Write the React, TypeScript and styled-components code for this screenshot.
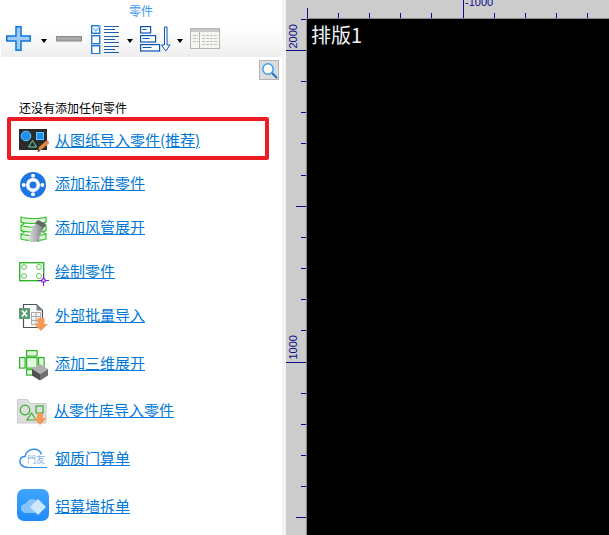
import React from 'react';
import styled, {createGlobalStyle} from 'styled-components';

const GlobalStyle = createGlobalStyle`
  html, body {
    margin: 0;
    padding: 0;
    background: #ffffff;
  }
`;

const Page = styled.div`
  width: 609px;
  height: 535px;
  display: flex;
  overflow: hidden;
  font-family: "Noto Sans CJK SC", "Liberation Sans", sans-serif;
`;

const SidePanel = styled.div`
  width: 282px;
  display: flex;
  flex-direction: column;
  flex-shrink: 0;
`;

const PanelTitle = styled.div`
  height: 23px;
  text-align: center;
  font-size: 12px;
  line-height: 22px;
  color: #3c96f0;
`;

const Toolbar = styled.div`
  height: 34px;
  margin-left: 1px;
  display: flex;
  align-items: flex-start;
  padding-left: 5px;
  background: linear-gradient(#ffffff 15%, #eeeeee);
`;

const ToolIcon = styled.svg<{$top: number; $after?: number}>`
  display: block;
  flex-shrink: 0;
  margin-top: ${p => p.$top}px;
  margin-right: ${p => p.$after ?? 0}px;
`;

const Caret = styled.span<{$before: number; $after: number}>`
  width: 0;
  height: 0;
  margin: 16px ${p => p.$after}px 0 ${p => p.$before}px;
  border-left: 3px solid transparent;
  border-right: 3px solid transparent;
  border-top: 4px solid #000000;
`;

const SearchRow = styled.div`
  display: flex;
  justify-content: flex-end;
  padding: 3px 3px 0 0;
`;

const SearchButton = styled.button`
  width: 20px;
  height: 20px;
  padding: 0;
  display: flex;
  align-items: center;
  justify-content: center;
  background: #dcdcdc;
  border: 1px solid #b4b4b4;
`;

const EmptyHint = styled.div`
  margin: 19px 0 0 19px;
  height: 18px;
  font-size: 12px;
  line-height: 18px;
  color: #000000;
`;

const ActionList = styled.div`
  display: flex;
  flex-direction: column;
  position: relative;
  margin-top: 1px;
`;

const ActionRow = styled.div<{$height: number}>`
  height: ${p => p.$height}px;
  display: flex;
  align-items: center;
`;

const IconSlot = styled.div<{$x: number; $dy: number; $width: number}>`
  width: ${p => p.$width}px;
  box-sizing: border-box;
  padding-left: ${p => p.$x}px;
  margin-top: ${p => p.$dy * 2}px;
  display: flex;
  align-items: center;
  flex-shrink: 0;
`;

const ActionLink = styled.a`
  font-size: 15px;
  line-height: 18px;
  color: #0078d7;
  text-decoration: underline;
  white-space: nowrap;
`;

const Highlight = styled.div`
  position: absolute;
  left: 7px;
  top: -1px;
  width: 262px;
  height: 43px;
  border: 4px solid #ed1c24;
  border-radius: 2px;
  box-sizing: border-box;
  pointer-events: none;
`;

const Divider = styled.div`
  width: 4px;
  flex-shrink: 0;
  background: #f4f4f4;
`;

const Workspace = styled.div`
  flex: 1;
  display: grid;
  grid-template-columns: 20px 1fr;
  grid-template-rows: 18px 1fr;
  background: #cccccc;
`;

const RulerDrawing = styled.svg`
  display: block;
  font-family: "Liberation Sans", sans-serif;
  font-size: 11px;
`;

const Canvas = styled.div`
  background: #000000;
  border-left: 1px solid #8c8c8c;
  border-top: 1px solid #8c8c8c;
  padding: 3px 0 0 4px;
  color: #eef4fa;
  font-size: 20px;
  line-height: 26px;
`;

const TICK = '#0c0c8a';
const topMinor = [338, 369, 400, 431, 494, 525, 556, 587];
const leftMinor = [81, 112, 143, 175, 237, 268, 299, 330, 393, 424, 455, 486];

const TopRuler = () => (
  <RulerDrawing width={303} height={18} viewBox="306 0 303 18">
    <rect x={307} y={8} width={1} height={10} fill={TICK} />
    {topMinor.map(x => (
      <rect key={x} x={x} y={13} width={1} height={5} fill={TICK} />
    ))}
    <rect x={463} y={0} width={1} height={18} fill={TICK} />
    <text x={465} y={6} fill={TICK}>-1000</text>
  </RulerDrawing>
);

const LeftRuler = () => (
  <RulerDrawing width={20} height={517} viewBox="286 18 20 517">
    <rect x={301} y={19} width={5} height={1} fill={TICK} />
    {leftMinor.map(y => (
      <rect key={y} x={301} y={y} width={5} height={1} fill={TICK} />
    ))}
    <rect x={286} y={50} width={20} height={1} fill={TICK} />
    <rect x={296} y={206} width={10} height={1} fill={TICK} />
    <rect x={286} y={362} width={20} height={1} fill={TICK} />
    <rect x={296} y={517} width={10} height={1} fill={TICK} />
    <text transform="translate(296.5 48.5) rotate(-90)" fill={TICK}>2000</text>
    <text transform="translate(296.5 359.5) rotate(-90)" fill={TICK}>1000</text>
  </RulerDrawing>
);

const PlusIcon = () => (
  <ToolIcon width={26} height={26} viewBox="0 0 26 26" $top={3}>
    <path d="M10 .8h5v9.200h9.200v5H15v9.200h-5V15H.8v-5H10z" fill="#9ecbf7" stroke="#0a78dc" strokeWidth={1.5} />
  </ToolIcon>
);

const MinusIcon = () => (
  <ToolIcon width={27} height={6} viewBox="0 0 27 6" $top={13} $after={8}>
    <rect x={0.5} y={0.5} width={25} height={4.500} fill="#a8a8a8" stroke="#8a8a8a" />
  </ToolIcon>
);

const ChecklistIcon = () => (
  <ToolIcon width={28} height={29} viewBox="0 0 28 29" $top={2}>
    <rect x={0.7} y={0.7} width={8} height={7.600} fill="#fff" stroke="#1d78d0" strokeWidth={1.4} />
    <path d="M2.500 3.500l2.300 2.500L9.500 0.500" fill="none" stroke="#8ec4f4" strokeWidth={1.6} />
    <rect x={0.7} y={10.700} width={8} height={8} fill="#fff" stroke="#1d78d0" strokeWidth={1.4} />
    <rect x={0.7} y={20.700} width={8} height={8} fill="#fff" stroke="#1d78d0" strokeWidth={1.4} />
    <path
      d="M13 1.500h15M13 4.500h11M13 7.500h15M13 11.500h15M13 14.500h11M13 17.500h15M13 21.500h15M13 24.500h11M13 27.500h15"
      stroke="#1f5fa8"
      strokeWidth={1.1}
    />
  </ToolIcon>
);

const SortIcon = () => (
  <ToolIcon width={31} height={26} viewBox="0 0 31 26" $top={3}>
    <rect x={0.6} y={0.6} width={10} height={6.400} fill="#fff" stroke="#0b55b0" strokeWidth={1.2} />
    <rect x={0.6} y={9.600} width={15} height={6.400} fill="#fff" stroke="#0b55b0" strokeWidth={1.2} />
    <rect x={0.6} y={18.600} width={19} height={6.400} fill="#fff" stroke="#0b55b0" strokeWidth={1.2} />
    <path d="M2.500 3.500h4M2.500 12.500h7M2.500 21.500h9" stroke="#0b55b0" />
    <path d="M24.500 1h2.500v18h3l-4.250 6-4.250-6h3z" fill="#fff" stroke="#0b55b0" />
  </ToolIcon>
);

const TableIcon = () => (
  <ToolIcon width={30} height={21} viewBox="0 0 30 21" $top={5}>
    <rect x={0.5} y={0.5} width={29} height={20} fill="#f4f4f0" stroke="#b5b5b5" />
    <rect x={1} y={1} width={28} height={3} fill="#c8c8c8" />
    <path d="M9.500 4v16" stroke="#b5b5b5" />
    <path
      d="M3 7.500h5M3 10.500h5M3 13.500h5M12 7.500h15M12 10.500h15M12 13.500h15M12 16.500h15"
      stroke="#c0c0c0"
      strokeDasharray="3 1"
    />
  </ToolIcon>
);

const SearchIcon = () => (
  <svg width={17} height={17} viewBox="0 0 17 17">
    <circle cx={7} cy={7} r={5.2} fill="#ffffff" stroke="#3b9cf0" strokeWidth={1.5} />
    <path d="M11 11l5 5" stroke="#1f6fc8" strokeWidth={2} />
  </svg>
);

const DrawingImportIcon = () => (
  <svg width={30} height={23} viewBox="0 0 30 23">
    <rect x={0} y={0} width={28} height={21} fill="#2b2b2b" />
    <circle cx={7} cy={7} r={4.800} fill="#1e90f0" stroke="#63c5ff" />
    <rect x={17.500} y={3.500} width={7} height={7} fill="#1e90f0" stroke="#63c5ff" />
    <path d="M13.500 11.500l4 6.500h-8z" fill="none" stroke="#63e0a8" />
    <path d="M19 22l1-4 7-6 3 2.500-7.500 6z" fill="#e08a3c" />
    <path d="M27 12l1.200-1 2 2.200-.8 1.300z" fill="#e87878" />
    <path d="M18.500 23l.8-2.800 2.200 1.700z" fill="#4a3a30" />
  </svg>
);

const FlangeIcon = () => (
  <svg width={26} height={26} viewBox="0 0 26 26">
    <circle cx={13} cy={13} r={13} fill="#1d76e2" />
    <circle cx={13} cy={13} r={7} fill="#ffffff" />
    <circle cx={13} cy={13} r={3.500} fill="#1d76e2" />
    <circle cx={13} cy={3.700} r={2} fill="#ffffff" />
    <circle cx={13} cy={22.300} r={2} fill="#ffffff" />
    <circle cx={3.700} cy={13} r={2} fill="#ffffff" />
    <circle cx={22.300} cy={13} r={2} fill="#ffffff" />
  </svg>
);

const DuctIcon = () => (
  <svg width={27} height={27} viewBox="0 0 27 27">
    <defs>
      <linearGradient id="ductFill" x1="0" y1="0" x2="1" y2="0">
        <stop offset="0" stopColor="#dcdcde" />
        <stop offset="0.5" stopColor="#aeaeb2" />
        <stop offset="1" stopColor="#77777b" />
      </linearGradient>
    </defs>
    <g fill="#dcf6d6" stroke="#35c02f" strokeWidth={1.2}>
      <path d="M1 2c6 2 19 2 25 0v5c-6 2-19 2-25 0z" />
      <path d="M1 10.500c6 2 19 2 25 0v5c-6 2-19 2-25 0z" />
      <path d="M1 19c6 2 19 2 25 0v5c-6 2-19 2-25 0z" />
      <path d="M1 7l3 1.800-3 1.700M26 7l-3 1.800 3 1.700M1 15.500l3 1.800-3 1.700M26 15.500l-3 1.800 3 1.700" fill="none" />
    </g>
    <path d="M9 27c0-7 2-13 7-19l8 5c-3 4-5 8-5 14z" fill="url(#ductFill)" />
    <path d="M15 8l3-3 8 4-2 4z" fill="#66666a" />
  </svg>
);

const SketchPartIcon = () => (
  <svg width={31} height={25} viewBox="0 0 31 25">
    <rect x={0.7} y={0.7} width={24} height={18} fill="#ffffff" stroke="#2fb52a" strokeWidth={1.4} />
    <circle cx={5} cy={5} r={2.500} fill="none" stroke="#66c55f" />
    <circle cx={20} cy={5} r={2.500} fill="none" stroke="#66c55f" />
    <circle cx={5} cy={14} r={2.500} fill="none" stroke="#66c55f" />
    <circle cx={20} cy={14} r={2.500} fill="none" stroke="#66c55f" />
    <path d="M24.500 12v12M19 18.500h11" stroke="#7a10d8" />
    <rect x={23} y={17} width={3} height={3} fill="#ffffff" stroke="#7a10d8" />
  </svg>
);

const ExcelIcon = () => (
  <svg width={30} height={28} viewBox="0 0 30 28">
    <path d="M4.500 1.500h13l6 6v17h-19z" fill="#ffffff" stroke="#4b5560" strokeWidth={1.2} />
    <path d="M17.500 1.500v6h6z" fill="#7b828a" />
    <rect x={0} y={5} width={11} height={11} fill="#5c9a72" />
    <path d="M3 7.500l5 6M8 7.500l-5 6" stroke="#ffffff" strokeWidth={1.7} />
    <path d="M12.500 9.500h9v12h-9zM12.500 13.500h9M12.500 17.500h9M17 9.500v12" fill="#f2f2f2" stroke="#a9a9a9" />
    <path d="M18.500 15h7v6H29l-7 7-7-7h3.500z" fill="#f59a58" />
  </svg>
);

const CubeIcon = () => (
  <svg width={30} height={31} viewBox="0 0 30 31">
    <g fill="#e4f8e0" stroke="#2fb52a" strokeWidth={1.2}>
      <rect x={7.600} y={0.600} width={10.500} height={5.500} />
      <rect x={0.600} y={7.600} width={5.500} height={10.500} />
      <rect x={7.600} y={7.600} width={10.500} height={10.500} />
      <rect x={19.600} y={7.600} width={5.500} height={10.500} />
      <rect x={7.600} y={19.600} width={9.500} height={5.500} />
    </g>
    <path d="M13 19l8-5 8 5-8 5z" fill="#b0b0b0" />
    <path d="M13 19l8 5v6.500l-8-5z" fill="#4f4f4f" />
    <path d="M29 19l-8 5v6.500l8-5z" fill="#707070" />
  </svg>
);

const LibraryIcon = () => (
  <svg width={32} height={29} viewBox="0 0 32 29">
    <path d="M0.500 1.500h10l3 4h15.500v19.500h-28.500z" fill="#dedede" stroke="#cccccc" />
    <circle cx={8} cy={12} r={4.800} fill="none" stroke="#2fb52a" strokeWidth={1.2} />
    <path d="M14.500 15l4.500 7h-9z" fill="none" stroke="#2fb52a" strokeWidth={1.2} />
    <rect x={19} y={8} width={7} height={7} fill="none" stroke="#2fb52a" strokeWidth={1.2} />
    <path d="M20 15h6v5h3.500l-6.500 7-6.500-7H20z" fill="#f59a58" />
  </svg>
);

const CloudIcon = () => (
  <svg width={29} height={21} viewBox="0 0 29 21">
    <path
      d="M9 19.500C3 19.500 .8 16 1 13c.2-3 2.500-4.500 5-4.500C7 3.500 11 .8 16 1.200c3 .3 5.500 2.300 6.500 5"
      fill="none"
      stroke="#2f8ef0"
      strokeWidth={1.5}
    />
    <path d="M9 19.500h19" stroke="#2f8ef0" />
    <text x={8} y={15} fontSize={9} fill="#7fb3ec" fontFamily='"Noto Sans CJK TC", sans-serif'>門友</text>
  </svg>
);

const CloudAppIcon = () => (
  <svg width={32} height={32} viewBox="0 0 32 32">
    <defs>
      <linearGradient id="appFill" x1="0" y1="0" x2="0" y2="1">
        <stop offset="0" stopColor="#42a5ff" />
        <stop offset="1" stopColor="#1f8bf8" />
      </linearGradient>
    </defs>
    <rect width={32} height={32} rx={7} fill="url(#appFill)" />
    <path d="M10 24c-8 0-8-9-1-9.500C11 9 18 8.500 21 13l-3 11z" fill="#86c4ff" />
    <path d="M21 10l8 8-8 8-8-8z" fill="#cde7ff" />
  </svg>
);

const actions = [
  {label: '从图纸导入零件(推荐)', height: 44, x: 19, dy: 0, width: 55, icon: <DrawingImportIcon />},
  {label: '添加标准零件', height: 42, x: 20, dy: 1.5, width: 55, icon: <FlangeIcon />},
  {label: '添加风管展开', height: 46, x: 20, dy: 1.5, width: 55, icon: <DuctIcon />},
  {label: '绘制零件', height: 42, x: 19, dy: 3, width: 55, icon: <SketchPartIcon />},
  {label: '外部批量导入', height: 46, x: 19, dy: 2, width: 55, icon: <ExcelIcon />},
  {label: '添加三维展开', height: 50, x: 19, dy: 2, width: 55, icon: <CubeIcon />},
  {label: '从零件库导入零件', height: 44, x: 17, dy: 2, width: 54, icon: <LibraryIcon />},
  {label: '钢质门算单', height: 52, x: 19, dy: 0, width: 55, icon: <CloudIcon />},
  {label: '铝幕墙拆单', height: 44, x: 17, dy: -1, width: 55, icon: <CloudAppIcon />}
];

const App = () => (
  <Page>
    <GlobalStyle />
    <SidePanel>
      <PanelTitle>零件</PanelTitle>
      <Toolbar>
        <PlusIcon />
        <Caret $before={9} $after={9} />
        <MinusIcon />
        <ChecklistIcon />
        <Caret $before={8} $after={7} />
        <SortIcon />
        <Caret $before={6} $after={7} />
        <TableIcon />
      </Toolbar>
      <SearchRow>
        <SearchButton>
          <SearchIcon />
        </SearchButton>
      </SearchRow>
      <EmptyHint>还没有添加任何零件</EmptyHint>
      <ActionList>
        <Highlight />
        {actions.map(action => (
          <ActionRow key={action.label} $height={action.height}>
            <IconSlot $x={action.x} $dy={action.dy} $width={action.width}>
              {action.icon}
            </IconSlot>
            <ActionLink href="#">{action.label}</ActionLink>
          </ActionRow>
        ))}
      </ActionList>
    </SidePanel>
    <Divider />
    <Workspace>
      <div />
      <TopRuler />
      <LeftRuler />
      <Canvas>排版1</Canvas>
    </Workspace>
  </Page>
);

export default App;
